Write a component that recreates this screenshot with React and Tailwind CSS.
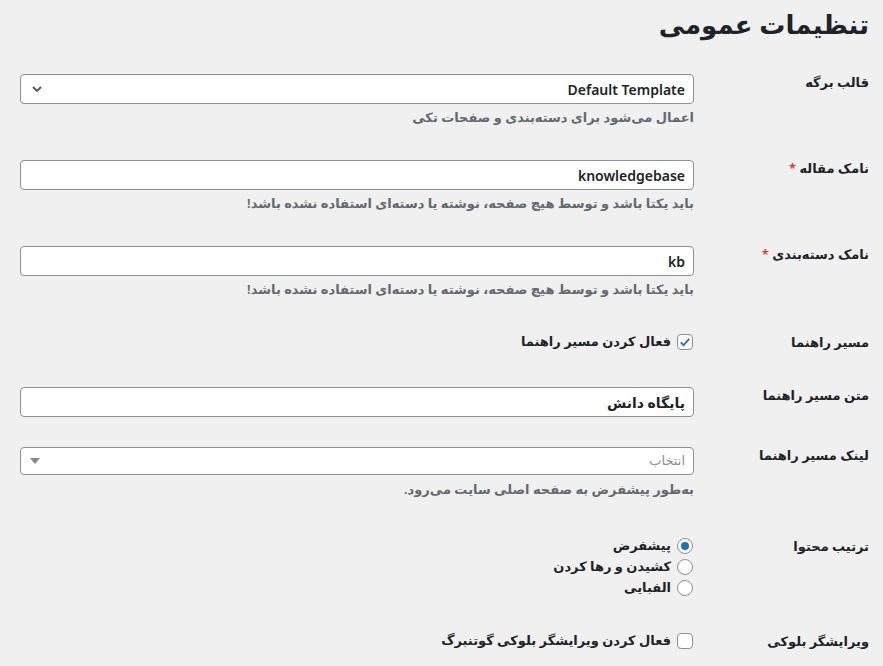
export default function App() {
  const font = { fontFamily: '"Noto Sans", "DejaVu Sans", sans-serif' };
  const label = "w-[189px] shrink-0 pr-[14px] pl-[20px] text-[13px] leading-[16px] font-semibold text-[#1d2327]";
  const input = "w-[674px] h-[30px] bg-white border border-[#8c8f94] rounded-[4px] flex items-center px-2 text-[14px] font-semibold text-[#1d2327]";
  const desc = "mt-[3px] text-[13px] leading-[20px] font-semibold text-[#646970]";
  const Radio = ({ on, text }) => (
    <div className="flex items-center gap-[6px] h-[21px]">
      <span className="w-4 h-4 rounded-full border border-[#8c8f94] bg-white flex items-center justify-center">
        {on && <span className="w-2 h-2 rounded-full bg-[#2271b1]" />}
      </span>
      <span className="text-[13px] font-semibold text-[#1d2327]">{text}</span>
    </div>
  );
  const Check = ({ on }) => (
    <span className="w-4 h-4 rounded-[4px] border border-[#8c8f94] bg-white flex items-center justify-center">
      {on && (
        <svg width="14" height="14" viewBox="0 0 20 20"><path d="M4 10.5l4 4 8-9" fill="none" stroke="#2271b1" strokeWidth="2.6" /></svg>
      )}
    </span>
  );
  return (
    <div dir="rtl" style={font} className="w-[883px] h-[666px] bg-[#f0f0f1] overflow-hidden">
      <h1 className="pr-[14px] pt-[7px] h-[74px] text-[26px] leading-[34px] font-bold text-[#1d2327]">تنظیمات عمومی</h1>
      <div className="flex h-[86px]">
        <div className={label}>قالب برگه</div>
        <div>
          <div className={input + " justify-between"}>
            <span>Default Template</span>
            <svg width="12" height="12" viewBox="0 0 12 12" className="ml-[2px]"><path d="M2 4l4 4 4-4" fill="none" stroke="#50575e" strokeWidth="1.8" /></svg>
          </div>
          <div className={desc}>اعمال می‌شود برای دسته‌بندی و صفحات تکی</div>
        </div>
      </div>
      <div className="flex h-[86px]">
        <div className={label}>نامک مقاله <span className="text-[#d63638]">*</span></div>
        <div>
          <div className={input}>knowledgebase</div>
          <div className={desc}>باید یکتا باشد و توسط هیچ صفحه، نوشته یا دسته‌ای استفاده نشده باشد!</div>
        </div>
      </div>
      <div className="flex h-[88px]">
        <div className={label}>نامک دسته‌بندی <span className="text-[#d63638]">*</span></div>
        <div>
          <div className={input}>kb</div>
          <div className={desc}>باید یکتا باشد و توسط هیچ صفحه، نوشته یا دسته‌ای استفاده نشده باشد!</div>
        </div>
      </div>
      <div className="flex h-[53px]">
        <div className={label}>مسیر راهنما</div>
        <div className="flex items-center gap-[6px] h-[16px] pr-[1px]">
          <Check on />
          <span className="text-[13px] font-semibold text-[#1d2327]">فعال کردن مسیر راهنما</span>
        </div>
      </div>
      <div className="flex h-[60px]">
        <div className={label}>متن مسیر راهنما</div>
        <div className={input}>پایگاه دانش</div>
      </div>
      <div className="flex h-[91px]">
        <div className={label}>لینک مسیر راهنما</div>
        <div>
          <div className="w-[674px] h-[28px] bg-white border border-[#8c8f94] rounded-[4px] flex items-center justify-between px-2 text-[13px] text-[#8c8f94]">
            <span>انتخاب</span>
            <svg width="10" height="6" viewBox="0 0 10 6" className="ml-[1px]"><path d="M0 0h10L5 6z" fill="#888" /></svg>
          </div>
          <div className={desc + " mt-[4px]"}>به‌طور پیشفرض به صفحه اصلی سایت می‌رود.</div>
        </div>
      </div>
      <div className="flex h-[95px]">
        <div className={label}>ترتیب محتوا</div>
        <div className="pr-[1px] -mt-[3px]">
          <Radio on text="پیشفرض" />
          <Radio text="کشیدن و رها کردن" />
          <Radio text="الفبایی" />
        </div>
      </div>
      <div className="flex h-[40px]">
        <div className={label}>ویرایشگر بلوکی</div>
        <div className="flex items-center gap-[6px] h-[16px] pr-[1px]">
          <Check />
          <span className="text-[13px] font-semibold text-[#1d2327]">فعال کردن ویرایشگر بلوکی گوتنبرگ</span>
        </div>
      </div>
    </div>
  );
}
